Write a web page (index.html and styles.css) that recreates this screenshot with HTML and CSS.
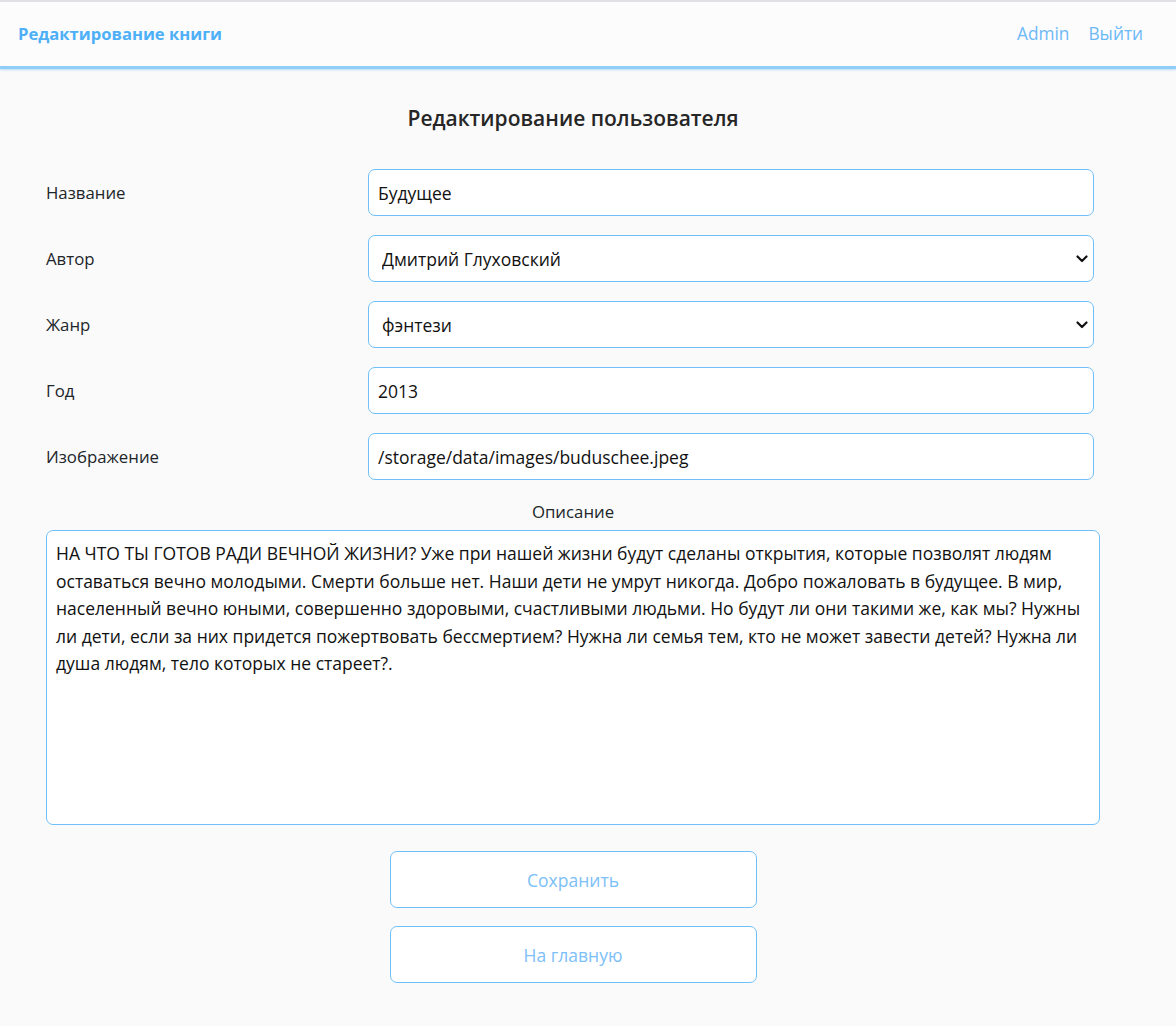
FILE: index.html
```html
<!DOCTYPE html>
<html lang="ru">
<head>
<meta charset="utf-8">
<title>Редактирование книги</title>
<link rel="stylesheet" href="styles.css">
</head>
<body>
<header class="topbar">
  <a class="brand" href="#">Редактирование книги</a>
  <nav class="nav">
    <a href="#">Admin</a>
    <a href="#">Выйти</a>
  </nav>
</header>
<main class="page">
  <h1 class="title">Редактирование пользователя</h1>
  <form class="form">
    <div class="row">
      <label class="label">Название</label>
      <input class="field" type="text" value="Будущее">
    </div>
    <div class="row">
      <label class="label">Автор</label>
      <div class="select-wrap">
        <select class="field select"><option>Дмитрий Глуховский</option></select>
        <svg class="chev" width="12" height="8" viewBox="0 0 12 8"><path d="M1.5 1.5 L6 6 L10.5 1.5" fill="none" stroke="#111" stroke-width="2.2" stroke-linecap="round" stroke-linejoin="round"/></svg>
      </div>
    </div>
    <div class="row">
      <label class="label">Жанр</label>
      <div class="select-wrap">
        <select class="field select"><option>фэнтези</option></select>
        <svg class="chev" width="12" height="8" viewBox="0 0 12 8"><path d="M1.5 1.5 L6 6 L10.5 1.5" fill="none" stroke="#111" stroke-width="2.2" stroke-linecap="round" stroke-linejoin="round"/></svg>
      </div>
    </div>
    <div class="row">
      <label class="label">Год</label>
      <input class="field" type="text" value="2013">
    </div>
    <div class="row">
      <label class="label">Изображение</label>
      <input class="field" type="text" value="/storage/data/images/buduschee.jpeg">
    </div>
    <div class="desc-label">Описание</div>
    <textarea class="desc" wrap="off">НА ЧТО ТЫ ГОТОВ РАДИ ВЕЧНОЙ ЖИЗНИ? Уже при нашей жизни будут сделаны открытия, которые позволят людям
оставаться вечно молодыми. Смерти больше нет. Наши дети не умрут никогда. Добро пожаловать в будущее. В мир,
населенный вечно юными, совершенно здоровыми, счастливыми людьми. Но будут ли они такими же, как мы? Нужны
ли дети, если за них придется пожертвовать бессмертием? Нужна ли семья тем, кто не может завести детей? Нужна ли
душа людям, тело которых не стареет?.</textarea>
    <div class="actions">
      <button class="btn" type="button">Сохранить</button>
      <button class="btn" type="button">На главную</button>
    </div>
  </form>
</main>
</body>
</html>
```
FILE: styles.css
```css
* { box-sizing: border-box; }
html, body { margin: 0; padding: 0; }
body {
  background: #fafafa;
  font-family: "Open Sans", "Noto Sans", sans-serif;
  color: #212529;
  font-size: 16px;
}
.topbar {
  height: 69px;
  border-top: 2px solid #e2e2e6;
  background: #fcfcfd;
  border-bottom: 3px solid #90cdf7;
  box-shadow: 0 1px 2px rgba(120, 190, 240, 0.5);
  display: flex;
  align-items: center;
  justify-content: space-between;
  padding: 0 33px 1px 18px;
}
.brand {
  color: #4db0f7;
  font-weight: 700;
  font-size: 16.6px;
  text-decoration: none;
}
.nav { display: flex; gap: 19px; }
.nav a {
  color: #6cb9f7;
  text-decoration: none;
  font-size: 17.3px;
}
.page {
  width: 1054px;
  margin: 0 0 0 46px;
  padding-top: 35px;
}
.title {
  margin: 0 0 37px;
  text-align: center;
  font-size: 21px;
  font-weight: 600;
  color: #262626;
}
.form { display: flex; flex-direction: column; }
.row {
  display: flex;
  align-items: center;
  height: 47px;
  margin-bottom: 19px;
}
.label { width: 322px; font-size: 16.8px; color: #212529; }
.field {
  width: 726px;
  height: 47px;
  border: 1px solid #6fc0f9;
  border-radius: 7px;
  background: #fff;
  font-family: inherit;
  font-size: 17.5px;
  color: #111;
  padding: 0 9px;
  outline: none;
}
.select-wrap {
  position: relative;
  width: 726px;
  height: 47px;
}
.select {
  appearance: none;
  -webkit-appearance: none;
  padding: 0 30px 0 13px;
}
.chev {
  position: absolute;
  right: 6px;
  top: 20px;
  pointer-events: none;
}
.desc-label {
  text-align: center;
  margin-top: 1px;
  height: 30px;
  line-height: 24px;
  font-size: 16.8px;
  color: #212529;
}
.desc {
  width: 1054px;
  height: 295px;
  border: 1px solid #6fc0f9;
  border-radius: 7px;
  background: #fff;
  font-family: inherit;
  font-size: 17.5px;
  line-height: 27.5px;
  color: #111;
  padding: 9px 9px;
  resize: none;
  overflow: hidden;
  outline: none;
  margin-top: 0;
}
.actions {
  display: flex;
  flex-direction: column;
  align-items: center;
  gap: 18px;
  margin-top: 26px;
  padding-bottom: 40px;
}
.btn {
  width: 367px;
  height: 57px;
  background: #fff;
  border: 1px solid #6fc0f9;
  border-radius: 7px;
  color: #7cc0f7;
  font-family: inherit;
  font-size: 17.5px;
}
```
